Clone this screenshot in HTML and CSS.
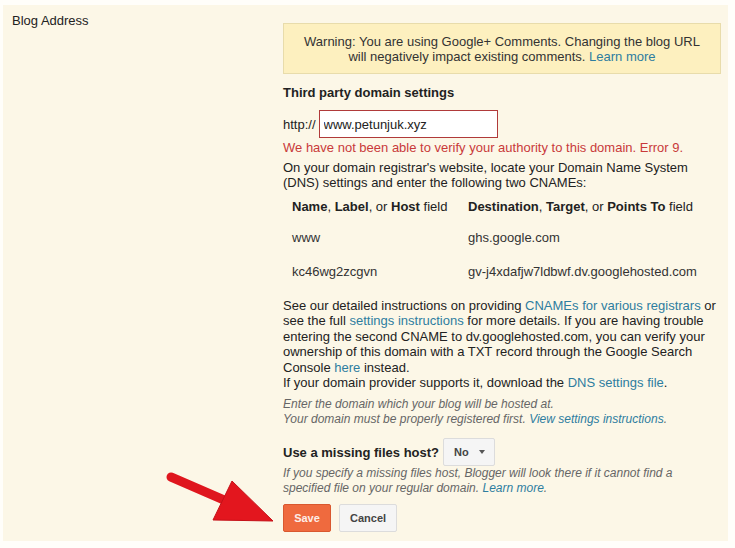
FILE: index.html
```html
<!DOCTYPE html>
<html>
<head>
    <title>Blog Address</title>
    <link rel="stylesheet" href="styles.css">
</head>
<body>
    <div class="settings-row">
        <div class="row-label">Blog Address</div>

        <div class="row-content">
            <div class="warning">
                Warning: You are using Google+ Comments. Changing the blog URL<br>
                will negatively impact existing comments. <a href="#">Learn more</a>
            </div>

            <h3>Third party domain settings</h3>
            <div class="domain-input">
                <span>http://</span>
                <input type="text" id="customDomain" class="invalid" value="www.petunjuk.xyz">
            </div>
            <div class="error">We have not been able to verify your authority to this domain. Error 9.</div>

            <p>On your domain registrar's website, locate your Domain Name System (DNS) settings and enter the following two CNAMEs:</p>

            <table class="cnames">
                <tr>
                    <th><b>Name</b>, <b>Label</b>, or <b>Host</b> field</th>
                    <th><b>Destination</b>, <b>Target</b>, or <b>Points To</b> field</th>
                </tr>
                <tr>
                    <td>www</td>
                    <td>ghs.google.com</td>
                </tr>
                <tr class="last">
                    <td>kc46wg2zcgvn</td>
                    <td>gv-j4xdafjw7ldbwf.dv.googlehosted.com</td>
                </tr>
            </table>

            <p class="details">
                See our detailed instructions on providing <a href="#">CNAMEs for various registrars</a> or
                see the full <a href="#">settings instructions</a> for more details. If you are having trouble
                entering the second CNAME to dv.googlehosted.com, you can verify your ownership of this
                domain with a TXT record through the Google Search Console <a href="#">here</a> instead.<br>
                If your domain provider supports it, download the <a href="#">DNS settings file</a>.
            </p>

            <p class="hint">
                Enter the domain which your blog will be hosted at.<br>
                Your domain must be properly registered first. <a href="#">View settings instructions</a>.
            </p>

            <div class="missing-host">
                <h3>Use a missing files host?</h3>
                <button class="dropdown">No<span class="caret"></span></button>
            </div>
            <p class="hint hint-tight">
                If you specify a missing files host, Blogger will look there if it cannot find a
                specified file on your regular domain. <a href="#">Learn more</a>.
            </p>

            <div class="buttons">
                <button class="button save">Save</button>
                <button class="button">Cancel</button>
            </div>
        </div>
    </div>

    <!-- red pointer arrow drawn over the form -->
    <svg class="pointer" width="125" height="64" viewBox="0 0 125 64">
        <line x1="11" y1="11" x2="64" y2="34" stroke="#df161e" stroke-width="9" stroke-linecap="round"/>
        <polygon points="72,15 53,54 113,55" fill="#e3161e" stroke="#c41219" stroke-width="1" stroke-linejoin="round"/>
    </svg>
</body>
</html>
```

FILE: styles.css
```css
body {
    margin: 0;
    padding: 5px 3px 7px 3px;
    background: #fffefa;
    font-family: "Liberation Sans", Arial, sans-serif;
    font-size: 13px;
    line-height: 15px;
    color: #222;
    position: relative;
}
a { color: #2e7d9f; text-decoration: none; }
h3 { font-size: 13px; line-height: 15px; margin: 11px 0 10px; }
p { margin: 5px 0 0; }

.settings-row {
    display: flex;
    background: #fcf7e7;
    padding: 0 7px 9px 9px;
    width: 709px;
}
.row-label { width: 271px; padding-top: 8px; }
.row-content { width: 438px; padding-top: 18px; }

.warning {
    background: #fdf0bf;
    border: 1px solid #e8dcab;
    padding: 10px 8px 9px;
    text-align: center;
    color: #333;
}

.domain-input { display: flex; align-items: center; gap: 3px; }
.domain-input input {
    width: 179px;
    height: 28px;
    box-sizing: border-box;
    padding: 0 4px;
    border: 1px solid #d9d9d9;
    background: #fff;
    font-family: inherit;
    font-size: 13px;
    color: #222;
    outline: none;
}
.domain-input input.invalid { border-color: #b03a3a; }
.error { color: #c93a3a; margin-top: 2px; }

.cnames { border-collapse: collapse; }
.cnames th, .cnames td {
    text-align: left;
    font-weight: normal;
    padding: 8px 9px 9px;
}
.cnames th { padding-top: 9px; padding-bottom: 8px; }
.cnames .last td { padding-top: 10px; padding-bottom: 8px; }
.cnames th:first-child, .cnames td:first-child { width: 158px; }
.cnames td { color: #333; }

.details { margin-top: 11px; line-height: 15.4px; }

.hint { font-size: 12px; font-style: italic; color: #666; margin-top: 7px; }
.hint-tight { margin-top: 0; }

.missing-host { display: flex; align-items: center; gap: 4px; margin-top: 11px; }
.missing-host h3 { margin: 0; }

.dropdown, .button {
    height: 28px;
    border: 1px solid #dcdcdc;
    background: #f5f5f5;
    font-family: inherit;
    font-size: 11px;
    font-weight: bold;
    color: #444;
    cursor: pointer;
    border-radius: 2px;
}
.dropdown { width: 52px; padding: 0 8px 0 10px; display: flex; align-items: center; }
.caret {
    margin-left: 10px;
    border-top: 4px solid #555;
    border-left: 3.5px solid transparent;
    border-right: 3.5px solid transparent;
}

.buttons { display: flex; gap: 8px; margin-top: 8px; }
.button { padding: 0 10px; }
.button.save {
    width: 48px;
    background: #ef6a3e;
    border-color: #d9582f;
    color: #fdeee8;
}

.pointer { position: absolute; left: 160px; top: 466px; pointer-events: none; }
```
